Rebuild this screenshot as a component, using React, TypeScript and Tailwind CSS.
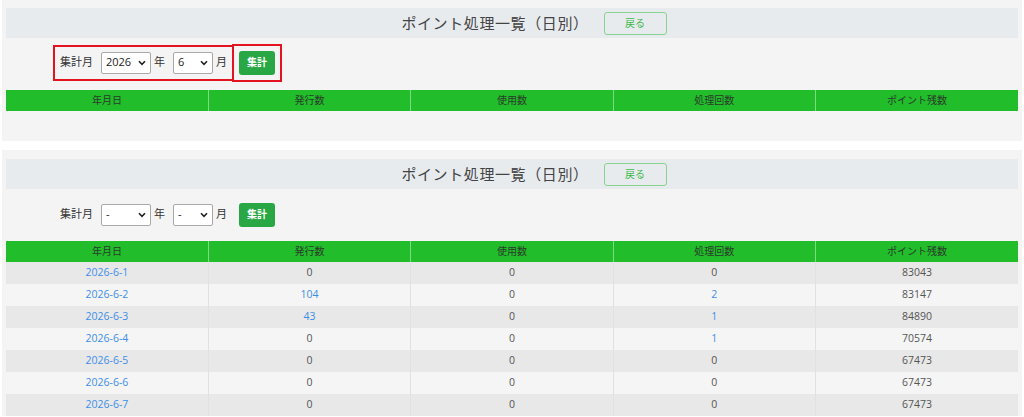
import React from "react";

type Cell = { v: string; link?: boolean };
type Row = [Cell, Cell, Cell, Cell, Cell];

const HEADERS = ["年月日", "発行数", "使用数", "処理回数", "ポイント残数"];

const n = (v: string, link = false): Cell => ({ v, link });

const ROWS: Row[] = [
  [n("2026-6-1", true), n("0"), n("0"), n("0"), n("83043")],
  [n("2026-6-2", true), n("104", true), n("0"), n("2", true), n("83147")],
  [n("2026-6-3", true), n("43", true), n("0"), n("1", true), n("84890")],
  [n("2026-6-4", true), n("0"), n("0"), n("1", true), n("70574")],
  [n("2026-6-5", true), n("0"), n("0"), n("0"), n("67473")],
  [n("2026-6-6", true), n("0"), n("0"), n("0"), n("67473")],
  [n("2026-6-7", true), n("0"), n("0"), n("0"), n("67473")],
];

const FONT = "font-['Open_Sans','Noto_Sans_CJK_JP',sans-serif]";
const RED = "outline-2 outline-offset-[5px] outline-[#e3141f]";

export default function App() {
  return (
    <div className={`min-h-[417px] bg-white ${FONT} text-[#444]`}>
      <Panel year="2026" month="6" highlight rows={[]} />
      <div className="h-[9px]" />
      <Panel year="-" month="-" rows={ROWS} />
    </div>
  );
}

function Panel({
  year,
  month,
  highlight = false,
  rows,
}: {
  year: string;
  month: string;
  highlight?: boolean;
  rows: Row[];
}) {
  return (
    <section className={`mx-[2px] bg-[#f4f4f4] px-1 ${rows.length ? "pt-[9px]" : "pt-2 pb-[30px]"}`}>
      {/* title band */}
      <div className="flex h-[30px] items-center justify-center bg-[#e8ebee] pl-[44px]">
        <h2 className="text-[15px] leading-none tracking-[0.6px] text-[#444]">ポイント処理一覧（日別）</h2>
        <button className="ml-[15px] h-[23px] w-[63px] rounded-[3px] border border-[#86d490] text-[10px] text-[#3fb94c]">
          戻る
        </button>
      </div>

      {/* filter row */}
      <div className={`flex h-[52px] items-center pl-[54px] ${rows.length ? "pb-px" : "pb-[3px]"}`}>
        <div className={`flex items-center ${highlight ? RED : ""}`}>
          <span className="text-[11px] text-[#333]">集計月</span>
          <FakeSelect value={year} width="w-[50px]" className="ml-[8px]" />
          <span className="ml-[3px] text-[11px] text-[#333]">年</span>
          <FakeSelect value={month} width="w-[40px]" className="ml-[8px]" />
          <span className="ml-[3px] text-[11px] text-[#333]">月</span>
        </div>
        <div className={`ml-[12px] flex ${highlight ? RED : ""}`}>
          <button className="h-[24px] w-[36px] rounded-[3px] bg-[#29a744] text-[10px] font-bold text-white">
            集計
          </button>
        </div>
      </div>

      {/* table */}
      <table className="w-full table-fixed border-collapse text-[10.5px]">
        <thead>
          <tr className="h-[21px] bg-[#22bd2b]">
            {HEADERS.map((h, i) => (
              <th
                key={h}
                className={`text-[10px] font-normal text-[#2a3a2a] ${i > 0 ? "border-l border-[#7fd985]" : ""}`}
              >
                {h}
              </th>
            ))}
          </tr>
        </thead>
        <tbody>
          {rows.map((row, ri) => (
            <tr key={ri} className={`h-[22px] ${ri % 2 === 0 ? "bg-[#e8e8e8]" : "bg-[#f5f5f5]"}`}>
              {row.map((c, ci) => (
                <td
                  key={ci}
                  style={{ color: c.link ? "#3d8ee8" : "#555555" }}
                  className={`text-center ${ci > 0 ? "border-l border-[#e1e1e1]" : ""}`}
                >
                  {c.v}
                </td>
              ))}
            </tr>
          ))}
        </tbody>
      </table>
    </section>
  );
}

function FakeSelect({ value, width, className = "" }: { value: string; width: string; className?: string }) {
  return (
    <div
      className={`flex h-[22px] ${width} items-center justify-between rounded-[2px] border border-[#a9a9a9] bg-white px-[4px] text-[11px] text-[#222] ${className}`}
    >
      <span>{value}</span>
      <svg width="8" height="6" viewBox="0 0 8 6" fill="none">
        <path d="M1 1.2 4 4.4 7 1.2" stroke="#222" strokeWidth="1.6" />
      </svg>
    </div>
  );
}
